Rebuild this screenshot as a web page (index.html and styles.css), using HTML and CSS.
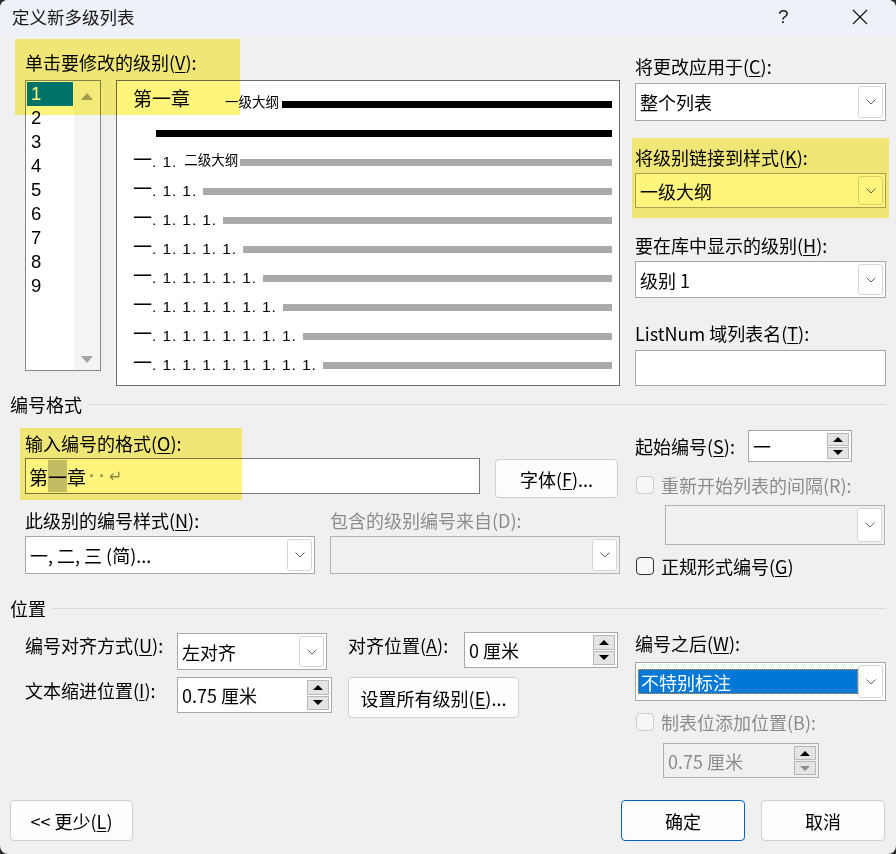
FILE: index.html
```html
<!DOCTYPE html>
<html lang="zh-CN">
<head>
	<meta charset="UTF-8">
	<title>定义新多级列表</title>
	<link rel="stylesheet" href="styles.css">
</head>
<body>
<div class="dialog">
	<div class="titlebar">
		<span class="title">定义新多级列表</span>
		<span class="help">?</span>
		<span class="close"><svg width="16" height="16" viewBox="0 0 16 16"><path d="M1 1L15 15M15 1L1 15" stroke="#1a1a1a" stroke-width="1.3" fill="none"/></svg></span>
	</div>

	<div class="content">
		<div class="top">
			<div class="top-left">
				<div class="label">单击要修改的级别(<u>V</u>):</div>
				<div class="level-row">
					<div class="levels">
						<ul class="level-list">
							<li class="active">1</li>
							<li>2</li>
							<li>3</li>
							<li>4</li>
							<li>5</li>
							<li>6</li>
							<li>7</li>
							<li>8</li>
							<li>9</li>
						</ul>
						<div class="vscroll">
							<span class="tri-up"></span>
							<span class="tri-down"></span>
						</div>
					</div>
					<div class="preview">
						<div class="pv-row"><span class="pv-head">第一章</span><span class="pv-name pv-name-1">一级大纲</span><span class="bar black"></span></div>
						<div class="pv-row"><span class="bar black bar-indent"></span></div>
						<div class="pv-row"><span class="pv-num"><span class="dash">一</span>. 1.</span><span class="pv-name pv-name-2">二级大纲</span><span class="bar bar-tight"></span></div>
						<div class="pv-row"><span class="pv-num"><span class="dash">一</span>. 1. 1.</span><span class="bar"></span></div>
						<div class="pv-row"><span class="pv-num"><span class="dash">一</span>. 1. 1. 1.</span><span class="bar"></span></div>
						<div class="pv-row"><span class="pv-num"><span class="dash">一</span>. 1. 1. 1. 1.</span><span class="bar"></span></div>
						<div class="pv-row"><span class="pv-num"><span class="dash">一</span>. 1. 1. 1. 1. 1.</span><span class="bar"></span></div>
						<div class="pv-row"><span class="pv-num"><span class="dash">一</span>. 1. 1. 1. 1. 1. 1.</span><span class="bar"></span></div>
						<div class="pv-row"><span class="pv-num"><span class="dash">一</span>. 1. 1. 1. 1. 1. 1. 1.</span><span class="bar"></span></div>
						<div class="pv-row"><span class="pv-num"><span class="dash">一</span>. 1. 1. 1. 1. 1. 1. 1. 1.</span><span class="bar"></span></div>
					</div>
				</div>
			</div>

			<div class="side">
				<div class="label side-l1">将更改应用于(<u>C</u>):</div>
				<div class="combo combo-38 side-c1"><span class="combo-text">整个列表</span><span class="drop"><svg width="10" height="6" viewBox="0 0 10 6"><polyline points="0.5,0.5 5,5 9.5,0.5" fill="none" stroke="#606060" stroke-width="1"/></svg></span></div>
				<div class="label side-l2">将级别链接到样式(<u>K</u>):</div>
				<div class="combo combo-35 side-c2"><span class="combo-text">一级大纲</span><span class="drop"><svg width="10" height="6" viewBox="0 0 10 6"><polyline points="0.5,0.5 5,5 9.5,0.5" fill="none" stroke="#606060" stroke-width="1"/></svg></span></div>
				<div class="label side-l3">要在库中显示的级别(<u>H</u>):</div>
				<div class="combo combo-37 side-c2"><span class="combo-text">级别 1</span><span class="drop"><svg width="10" height="6" viewBox="0 0 10 6"><polyline points="0.5,0.5 5,5 9.5,0.5" fill="none" stroke="#606060" stroke-width="1"/></svg></span></div>
				<div class="label side-l4">ListNum 域列表名(<u>T</u>):</div>
				<div class="textbox tb-listnum"></div>
			</div>
		</div>

		<div class="group-title gt-format"><span>编号格式</span><i></i></div>

		<div class="format">
			<div class="fmt-left">
				<div class="label fmt-l1">输入编号的格式(<u>O</u>):</div>
				<div class="fmt-row">
					<div class="textbox tb-format"><span>第</span><span class="sel">一</span><span>章</span><span class="marks">··</span><span class="ret">↵</span></div>
					<div class="btn btn-font">字体(<u>F</u>)...</div>
				</div>
				<div class="fmt-labels">
					<div class="label lbl-style">此级别的编号样式(<u>N</u>):</div>
					<div class="label disabled">包含的级别编号来自(D):</div>
				</div>
				<div class="fmt-combos">
					<div class="combo combo-38 combo-half"><span class="combo-text">一, 二, 三 (简)...</span><span class="drop"><svg width="10" height="6" viewBox="0 0 10 6"><polyline points="0.5,0.5 5,5 9.5,0.5" fill="none" stroke="#606060" stroke-width="1"/></svg></span></div>
					<div class="combo combo-38 combo-half combo-off"><span class="combo-text"></span><span class="drop"><svg width="10" height="6" viewBox="0 0 10 6"><polyline points="0.5,0.5 5,5 9.5,0.5" fill="none" stroke="#606060" stroke-width="1"/></svg></span></div>
				</div>
			</div>
			<div class="fmt-right">
				<div class="start-row">
					<div class="label start-label">起始编号(<u>S</u>):</div>
					<div class="spin spin-start"><span class="spin-text">一</span><span class="spin-btns"><span class="sb"><i class="t-up"></i></span><span class="sb"><i class="t-down"></i></span></span></div>
				</div>
				<div class="check-row check-restart disabled"><span class="check check-off"></span>重新开始列表的间隔(R):</div>
				<div class="combo combo-40 combo-off combo-restart"><span class="combo-text"></span><span class="drop"><svg width="10" height="6" viewBox="0 0 10 6"><polyline points="0.5,0.5 5,5 9.5,0.5" fill="none" stroke="#606060" stroke-width="1"/></svg></span></div>
				<div class="check-row check-legal"><span class="check"></span>正规形式编号(<u>G</u>)</div>
			</div>
		</div>

		<div class="group-title gt-pos"><span>位置</span><i></i></div>

		<div class="position">
			<div class="pos-left">
				<div class="pos-row pos-row-1">
					<div class="label lbl-align">编号对齐方式(<u>U</u>):</div>
					<div class="combo combo-37 combo-align"><span class="combo-text">左对齐</span><span class="drop"><svg width="10" height="6" viewBox="0 0 10 6"><polyline points="0.5,0.5 5,5 9.5,0.5" fill="none" stroke="#606060" stroke-width="1"/></svg></span></div>
					<div class="label lbl-at">对齐位置(<u>A</u>):</div>
					<div class="spin spin-at"><span class="spin-text">0 厘米</span><span class="spin-btns"><span class="sb"><i class="t-up"></i></span><span class="sb"><i class="t-down"></i></span></span></div>
				</div>
				<div class="pos-row pos-row-2">
					<div class="label lbl-indent">文本缩进位置(<u>I</u>):</div>
					<div class="spin spin-indent"><span class="spin-text">0.75 厘米</span><span class="spin-btns"><span class="sb"><i class="t-up"></i></span><span class="sb"><i class="t-down"></i></span></span></div>
					<div class="btn btn-all">设置所有级别(<u>E</u>)...</div>
				</div>
			</div>
			<div class="pos-right">
				<div class="label">编号之后(<u>W</u>):</div>
				<div class="combo combo-39 combo-after"><span class="combo-text"><span class="picked">不特别标注</span></span><span class="drop"><svg width="10" height="6" viewBox="0 0 10 6"><polyline points="0.5,0.5 5,5 9.5,0.5" fill="none" stroke="#606060" stroke-width="1"/></svg></span></div>
				<div class="check-row check-tab disabled"><span class="check check-off"></span>制表位添加位置(B):</div>
				<div class="spin spin-tab spin-off"><span class="spin-text">0.75 厘米</span><span class="spin-btns"><span class="sb"><i class="t-up"></i></span><span class="sb"><i class="t-down t-gray"></i></span></span></div>
			</div>
		</div>

		<div class="footer">
			<div class="btn btn-less">&lt;&lt; 更少(<u>L</u>)</div>
			<div class="footer-right">
				<div class="btn btn-ok">确定</div>
				<div class="btn btn-cancel">取消</div>
			</div>
		</div>
	</div>

	<div class="hl hl-levels"></div>
	<div class="hl hl-style"></div>
	<div class="hl hl-format"></div>
</div>
</body>
</html>
```

FILE: styles.css
```css
*{margin: 0;padding: 0;box-sizing: border-box;}
html,body{width: 896px;height: 854px;overflow: hidden;background: #2b2b2b;}
body{font-family: "Noto Sans CJK SC", "Noto Sans", sans-serif;font-size: 18px;color: #000;}
ul{list-style: none;}
u{text-decoration: underline;text-underline-offset: 2px;text-decoration-thickness: 1px;}

.dialog{position: relative;width: 896px;height: 854px;background: #f0f0f0;border-radius: 8px;overflow: hidden;}

/* title bar */
.titlebar{height: 37px;background: #eef2f8;display: flex;align-items: center;padding-left: 12px;}
.title{font-size: 17.5px;line-height: 24px;color: #1a1a1a;flex: 1;margin-top: -4px;}
.help{font-size: 19px;line-height: 24px;color: #1a1a1a;width: 20px;margin-right: 54px;margin-top: -4px;font-family: "Liberation Sans", sans-serif;font-weight: 300;}
.close{width: 16px;height: 16px;margin-right: 28px;margin-top: -4px;display: flex;}

.content{padding: 0 10px;}
.label{line-height: 24px;white-space: nowrap;}
.disabled{color: #8c8c8c;}

/* top area */
.top{display: flex;padding-left: 15px;}
.top-left{width: 595px;}
.top-left > .label{margin-top: 13px;}
.level-row{display: flex;margin-top: 6px;}

.levels{width: 76px;height: 291px;border: 1px solid #828790;background: #fff;display: flex;}
.level-list{width: 48px;padding-top: 1px;}
.level-list li{height: 24px;line-height: 23px;padding-left: 4px;margin: 0 1px;font-size: 18.5px;font-family: "Liberation Sans", sans-serif;}
.level-list li.active{background: #0078d7;color: #fff;}
.vscroll{flex: 1;background: #f4f4f4;display: flex;flex-direction: column;justify-content: space-between;align-items: center;padding: 12px 0 7px;}
.tri-up{width: 0;height: 0;border-left: 6.5px solid transparent;border-right: 6.5px solid transparent;border-bottom: 7px solid #a3a3a3;}
.tri-down{width: 0;height: 0;border-left: 6.5px solid transparent;border-right: 6.5px solid transparent;border-top: 7px solid #a3a3a3;}

.preview{width: 504px;height: 306px;margin-left: 15px;border: 1px solid #6d6d6d;background: #fff;padding: 5px 7px 0 16px;}
.pv-row{height: 29px;display: flex;align-items: center;font-size: 15px;white-space: nowrap;}
.pv-head{font-size: 19px;margin-top: -7px;}
.pv-name{font-size: 13.5px;}
.pv-name-1{margin-left: 35px;}
.pv-name-2{margin-left: 7px;}
.pv-num{font-family: "Liberation Sans", "Noto Sans CJK SC", sans-serif;font-size: 15.5px;letter-spacing: 0.9px;}
.dash{font-family: "Noto Sans CJK SC", sans-serif;font-size: 19px;letter-spacing: 0;}
.bar{flex: 1;height: 7px;background: #aaa;margin-top: 7px;margin-left: 6px;}
.bar.black{background: #000;margin-left: 3px;}
.bar.bar-indent{margin-left: 23px;}
.bar.bar-tight{margin-left: 2px;}

/* right column */
.side{width: 251px;margin-left: 15px;}
.side-l1{margin-top: 17px;}
.side-l2{margin-top: 24px;}
.side-l3{margin-top: 25px;}
.side-l4{margin-top: 23px;}
.side-c1{margin-top: 5px;}
.side-c2{margin-top: 4px;}
.tb-listnum{margin-top: 5px;height: 36px;}

.combo{display: flex;align-items: stretch;background: #fff;border: 1px solid #a8a8a8;padding: 2px;}
.combo-35{height: 35px;}
.combo-37{height: 37px;}
.combo-38{height: 38px;}
.combo-39{height: 39px;}
.combo-40{height: 40px;}
.combo-text{flex: 1;display: flex;align-items: center;padding-left: 2px;white-space: nowrap;overflow: hidden;}
.drop{width: 25px;border: 1px solid #d6d6d6;border-radius: 3px;background: #fff;display: flex;align-items: center;justify-content: center;}
.combo-off{background: #f0f0f0;border-color: #b4b4b4;}

.textbox{background: #fff;border: 1px solid #a8a8a8;}

/* group titles */
.group-title{display: flex;align-items: center;line-height: 24px;}
.group-title i{flex: 1;border-top: 1px solid #dadada;margin-left: 6px;margin-right: 0;}
.gt-format{margin-top: 6px;}
.gt-pos{margin-top: 18px;}

/* numbering format */
.format{display: flex;padding-left: 15px;}
.fmt-left{width: 595px;}
.fmt-l1{margin-top: 15px;}
.fmt-row{display: flex;margin-top: 3px;align-items: flex-start;}
.tb-format{width: 455px;height: 36px;border-color: #7a7a7a;display: flex;align-items: stretch;padding: 1px 0 1px 3px;font-size: 19px;}
.tb-format span{display: flex;align-items: center;}
.tb-format .sel{background: #c4c4cc;}
.tb-format .marks{font-family: "Liberation Sans", sans-serif;font-size: 18px;font-weight: bold;color: #9a9a9a;margin-left: 3px;letter-spacing: 4px;}
.tb-format .ret{font-family: "DejaVu Sans", sans-serif;font-size: 16px;color: #8a8a8a;margin-left: 0;}
.btn{display: flex;align-items: center;justify-content: center;background: #fdfdfd;border: 1px solid #d0d0d0;border-radius: 4px;white-space: nowrap;}
.btn-font{width: 123px;height: 39px;margin-left: 15px;margin-top: 1px;}
.fmt-labels{display: flex;margin-top: 10px;}
.lbl-style{width: 305px;}
.fmt-combos{display: flex;margin-top: 4px;}
.combo-half{width: 290px;}
.combo-half + .combo-half{margin-left: 15px;}

.fmt-right{width: 251px;margin-left: 15px;}
.start-row{display: flex;align-items: center;margin-top: 14px;}
.start-label{width: 113px;}
.spin{display: flex;background: #fff;border: 1px solid #a8a8a8;padding: 2px;}
.spin-start{width: 104px;height: 32px;}
.spin-text{flex: 1;display: flex;align-items: center;padding-left: 2px;white-space: nowrap;}
.spin-btns{width: 22px;display: flex;flex-direction: column;gap: 1px;}
.sb{flex: 1;background: #e4e4e4;border: 1px solid #b8b8b8;display: flex;align-items: center;justify-content: center;}
.t-up{width: 0;height: 0;border-left: 5px solid transparent;border-right: 5px solid transparent;border-bottom: 5px solid #000;}
.t-down{width: 0;height: 0;border-left: 5px solid transparent;border-right: 5px solid transparent;border-top: 5px solid #000;}
.t-gray{border-top-color: #8c8c8c;}

.check-row{display: flex;align-items: center;line-height: 24px;white-space: nowrap;}
.check{width: 18px;height: 18px;border: 1px solid #333;border-radius: 4px;background: #f7f7f7;margin-left: 1px;margin-right: 7px;}
.check-off{border-color: #cfcfcf;background: #f6f6f6;}
.check-restart{margin-top: 11px;}
.combo-restart{width: 220px;margin-left: 30px;margin-top: 8px;}
.check-legal{margin-top: 9px;color: #000;}

/* position */
.position{display: flex;padding-left: 15px;}
.pos-left{width: 595px;}
.pos-row{display: flex;align-items: flex-start;}
.pos-row-1{margin-top: 12px;}
.pos-row-2{margin-top: 7px;}
.lbl-align{width: 152px;margin-top: 1px;}
.combo-align{width: 150px;margin-top: 1px;}
.lbl-at{width: 116px;margin-left: 21px;margin-top: 1px;}
.spin-at{width: 154px;height: 36px;}
.lbl-indent{width: 152px;margin-top: 1px;}
.spin-indent{width: 155px;height: 36px;}
.btn-all{width: 171px;height: 41px;margin-left: 16px;}

.pos-right{width: 251px;margin-left: 15px;margin-top: 11px;}
.combo-after{margin-top: 7px;padding: 6px 2px 6px 2px;}
.combo-after .combo-text{padding-left: 0;}
.picked{display: flex;align-items: center;width: 100%;height: 100%;background: #0078d7;color: #fff;outline: 1px dotted #e08a3c;outline-offset: -1px;padding-left: 3px;}
.combo-after .drop{margin: -4px 0;}
.check-tab{margin-top: 9px;}
.spin-tab{width: 156px;height: 35px;margin-left: 28px;margin-top: 9px;}
.spin-off{background: #f0f0f0;border-color: #b0b0b0;color: #8c8c8c;}

/* footer */
.footer{display: flex;justify-content: space-between;margin-top: 22px;padding-right: 1px;}
.footer-right{display: flex;gap: 16px;}
.btn-less{width: 123px;height: 41px;}
.btn-ok,.btn-cancel{width: 124px;height: 41px;}
.btn-ok{border-color: #0067c0;}

/* yellow marker highlights drawn over the dialog */
.hl{position: absolute;background: #fff57c;mix-blend-mode: multiply;pointer-events: none;}
.hl-levels{left: 15px;top: 39px;width: 225px;height: 76px;}
.hl-style{left: 632px;top: 138px;width: 257px;height: 80px;}
.hl-format{left: 20px;top: 428px;width: 222px;height: 72px;}
```
